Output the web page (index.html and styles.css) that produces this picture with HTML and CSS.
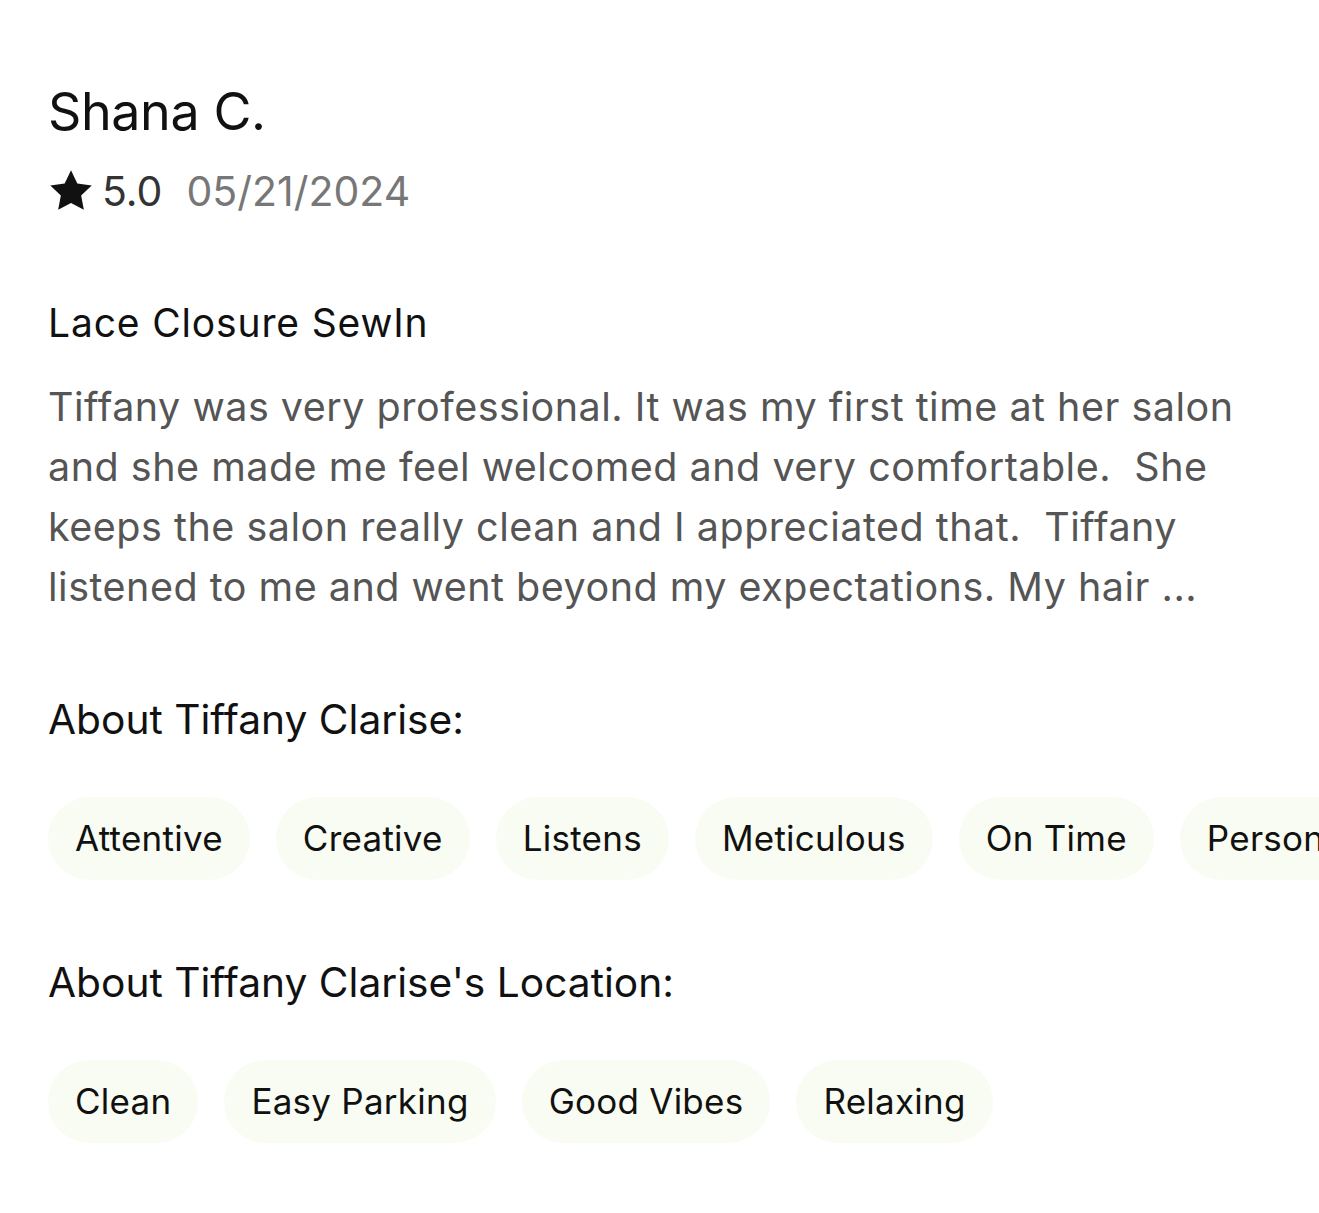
FILE: index.html
```html
<!DOCTYPE html>
<html lang="en">
<head>
    <meta charset="UTF-8">
    <meta name="viewport" content="width=device-width, initial-scale=1.0">
    <title>Review - Shana C.</title>
    <link rel="stylesheet" href="styles.css">
</head>
<body>

<!-- Single review card -->
<div class="review">
    <h1 class="reviewer">Shana C.</h1>
    <div class="rating-row">
        <svg class="star" viewBox="0 0 24 24" aria-hidden="true">
            <path d="M12 1.2l3.3 6.9 7.5 1-5.5 5.2 1.4 7.5L12 18.2l-6.7 3.6 1.4-7.5L1.2 9.1l7.5-1z"/>
        </svg>
        <span class="score">5.0</span>
        <span class="date">05/21/2024</span>
    </div>

    <h2 class="service">Lace Closure SewIn</h2>
    <p class="comment">Tiffany was very professional. It was my first time at her salon and she made me feel welcomed and very comfortable.&nbsp; She keeps the salon really clean and I appreciated that.&nbsp; Tiffany listened to me and went beyond my expectations. My hair ...</p>

    <h3 class="about">About Tiffany Clarise:</h3>
    <div class="tags">
        <span class="tag">Attentive</span>
        <span class="tag">Creative</span>
        <span class="tag">Listens</span>
        <span class="tag">Meticulous</span>
        <span class="tag">On Time</span>
        <span class="tag">Personable</span>
    </div>

    <h3 class="about">About Tiffany Clarise's Location:</h3>
    <div class="tags">
        <span class="tag">Clean</span>
        <span class="tag">Easy Parking</span>
        <span class="tag">Good Vibes</span>
        <span class="tag">Relaxing</span>
    </div>
</div>

</body>
</html>
```

FILE: styles.css
```css
body {
    font-family: 'Inter', 'Noto Sans', sans-serif;
    margin: 0;
    padding: 0;
    background-color: #ffffff;
    color: #111111;
    overflow: hidden;
}

.review {
    padding: 79px 0 0 48px;
}

/* Header */
.reviewer {
    font-size: 52px;
    line-height: 66px;
    font-weight: 400;
    margin: 0;
    letter-spacing: -0.4px;
}

.rating-row {
    display: flex;
    align-items: center;
    height: 50px;
    margin-top: 21px;
    font-size: 41px;
}

.star {
    width: 46px;
    height: 46px;
    fill: #111111;
    margin-right: 8px;
}

.score {
    color: #333333;
}

.date {
    color: #777777;
    margin-left: 24px;
}

/* Review body */
.service {
    font-size: 39px;
    line-height: 44px;
    font-weight: 400;
    letter-spacing: 0.85px;
    margin: 85px 0 0;
}

.comment {
    font-size: 39.5px;
    line-height: 60px;
    letter-spacing: 0.5px;
    color: #555555;
    margin: 32px 0 0;
    max-width: 1205px;
}

/* Tag sections */
.about {
    font-size: 40.7px;
    line-height: 50px;
    font-weight: 400;
    margin: 78px 0 0;
}

.tags {
    display: flex;
    flex-wrap: nowrap;
    gap: 26px;
    margin-top: 52px;
}

.tag {
    flex-shrink: 0;
    height: 83px;
    line-height: 83px;
    padding: 0 27px;
    border-radius: 42px;
    background-color: #f9fcf2;
    font-size: 35px;
    letter-spacing: 0.25px;
}
```
